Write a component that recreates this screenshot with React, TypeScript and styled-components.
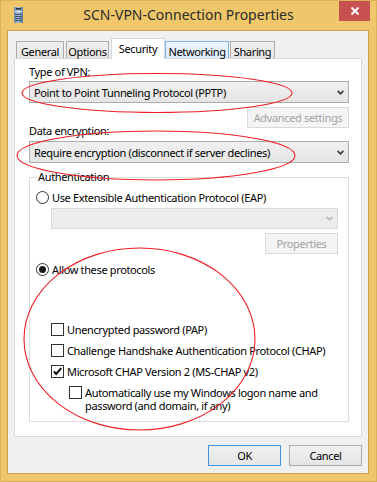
import styled, { createGlobalStyle } from 'styled-components'

const GlobalStyle = createGlobalStyle`
  html, body {
    margin: 0;
    padding: 0;
  }
  body {
    width: 377px;
    height: 482px;
    overflow: hidden;
    font-family: 'Noto Sans', 'Segoe UI', sans-serif;
  }
`

const WindowStyled = styled.div`
  position: relative;
  width: 377px;
  height: 482px;
  box-sizing: border-box;
  border: 1px solid #dcb458;
  background: #efc76a;
  display: flex;
  flex-direction: column;
  font-size: 11px;
  letter-spacing: -0.35px;
  color: #000;
`

const TitleBarStyled = styled.div`
  height: 29px;
  display: grid;
  grid-template-columns: 1fr auto 1fr;
`

const TitleIconStyled = styled.svg`
  margin: 6px 0 0 13px;
  align-self: start;
`

const TitleTextStyled = styled.div`
  font-size: 14px;
  letter-spacing: 0;
  line-height: 27px;
  color: #2b2b2b;
`

const CloseBtnStyled = styled.div`
  justify-self: end;
  width: 31px;
  height: 20px;
  margin-right: 6px;
  background: #c75050;
  display: flex;
  align-items: center;
  justify-content: center;
`

const ClientStyled = styled.div`
  flex: 1;
  margin: 0 7px 7px 6px;
  border: 1px solid #c9a24f;
  background: #f0f0f0;
  padding: 7px 6px;
  display: flex;
  flex-direction: column;
`

const TabRowStyled = styled.div`
  height: 20px;
  display: flex;
  align-items: flex-end;
`

const TabStyled = styled.div<{ $width: number; $ml: number; $active?: boolean; $hover?: boolean }>`
  box-sizing: border-box;
  width: ${p => p.$width}px;
  margin-left: ${p => p.$ml}px;
  height: ${p => (p.$active ? 21 : 17)}px;
  margin-bottom: ${p => (p.$active ? -1 : 0)}px;
  position: ${p => (p.$active ? 'relative' : 'static')};
  z-index: 1;
  padding-top: 2px;
  line-height: 15px;
  text-align: center;
  border: 1px solid ${p => (p.$active ? '#d9d9d9' : p.$hover ? '#7eb4ea' : '#acacac')};
  border-bottom: none;
  background: ${p =>
    p.$active ? '#fff' : p.$hover ? 'linear-gradient(#ecf4fc, #dcecfc)' : 'linear-gradient(#f0f0f0, #e5e5e5)'};
`

const PanelStyled = styled.div`
  flex: 1;
  background: #fff;
  border: 1px solid #d9d9d9;
  padding: 5px 12px 0 14px;
  display: flex;
  flex-direction: column;
`

const FieldLabelStyled = styled.div`
  line-height: 15px;
  margin-bottom: 2px;
`

const ComboStyled = styled.div<{ $disabled?: boolean }>`
  box-sizing: border-box;
  height: ${p => (p.$disabled ? 21 : 22)}px;
  border: 1px solid ${p => (p.$disabled ? '#d9d9d9' : '#acacac')};
  background: ${p => (p.$disabled ? '#ececec' : 'linear-gradient(#f0f0f0, #e5e5e5)')};
  padding: 0 4px;
  display: flex;
  align-items: center;
  justify-content: space-between;
  line-height: 15px;
`

const SubRowStyled = styled.div`
  height: 34px;
  margin-top: 4px;
  display: flex;
  justify-content: space-between;
  align-items: flex-start;
  & > ${FieldLabelStyled} {
    align-self: flex-end;
    margin-bottom: 3px;
  }
`

const PushButtonStyled = styled.button<{ $width: number; $default?: boolean }>`
  box-sizing: border-box;
  width: ${p => p.$width}px;
  height: 21px;
  padding: 0;
  font: inherit;
  letter-spacing: inherit;
  line-height: 15px;
  color: #000;
  border: 1px solid ${p => (p.$default ? '#3d94e6' : '#acacac')};
  background: linear-gradient(#f0f0f0, #e5e5e5);
  &:disabled {
    color: #a3a3a3;
    border-color: #d9d9d9;
    background: #f4f4f4;
  }
`

const GroupStyled = styled.div`
  position: relative;
  margin-top: 14px;
  border: 1px solid #dcdcdc;
  padding: 11px 0 7px 0;
  display: flex;
  flex-direction: column;
`

const GroupTitleStyled = styled.div`
  position: absolute;
  top: -9px;
  left: 7px;
  padding: 0 1px;
  background: #fff;
  line-height: 15px;
`

const RadioRowStyled = styled.div<{ $mt?: number }>`
  height: 17px;
  margin: ${p => p.$mt ?? 0}px 0 0 6px;
  display: flex;
  align-items: center;
  gap: 3px;
  line-height: 15px;
`

const RadioStyled = styled.div<{ $checked?: boolean }>`
  box-sizing: border-box;
  width: 13px;
  height: 13px;
  border-radius: 50%;
  border: 1px solid #333;
  background: #fff;
  display: flex;
  align-items: center;
  justify-content: center;
  &::after {
    content: '';
    display: ${p => (p.$checked ? 'block' : 'none')};
    width: 7px;
    height: 7px;
    border-radius: 50%;
    background: #1a1a1a;
  }
`

const IndentStyled = styled.div<{ $mt: number }>`
  margin: ${p => p.$mt}px 10px 0 21px;
  display: flex;
  flex-direction: column;
`

const PropsBtnWrapStyled = styled.div`
  margin: 4px 10px 0 0;
  align-self: flex-end;
  display: flex;
`

const CheckRowStyled = styled.div<{ $indent: number; $mt: number }>`
  margin: ${p => p.$mt}px 0 0 ${p => p.$indent}px;
  padding: 2px 0;
  display: flex;
  align-items: flex-start;
  gap: 3px;
`

const CheckBoxStyled = styled.div`
  box-sizing: border-box;
  width: 13px;
  height: 13px;
  flex-shrink: 0;
  border: 1px solid #333;
  background: #fff;
  display: flex;
  align-items: center;
  justify-content: center;
`

const CheckLabelStyled = styled.div`
  line-height: 13px;
  white-space: nowrap;
`

const ButtonRowStyled = styled.div`
  margin-top: 8px;
  display: flex;
  justify-content: flex-end;
  gap: 8px;
`

const MarksStyled = styled.svg`
  position: absolute;
  left: -1px;
  top: -1px;
  pointer-events: none;
  z-index: 5;
`

const Chevron = ({ disabled }: { disabled?: boolean }) => (
  <svg width="7" height="5" viewBox="0 0 7 5">
    <path d="M0.6 0.8 L3.5 3.8 L6.4 0.8" fill="none" stroke={disabled ? '#b8b8b8' : '#3c3c3c'} strokeWidth="1.7" />
  </svg>
)

const Radio = ({ checked, label, mt }: { checked?: boolean; label: string; mt?: number }) => (
  <RadioRowStyled $mt={mt}>
    <RadioStyled $checked={checked} />
    <span>{label}</span>
  </RadioRowStyled>
)

const Check = ({
  checked,
  indent,
  mt,
  children,
}: {
  checked?: boolean
  indent: number
  mt: number
  children: React.ReactNode
}) => (
  <CheckRowStyled $indent={indent} $mt={mt}>
    <CheckBoxStyled>
      {checked && (
        <svg width="11" height="11" viewBox="0 0 11 11">
          <path d="M1.8 5.4 L4.2 8 L9.2 2.2" fill="none" stroke="#111" strokeWidth="2" />
        </svg>
      )}
    </CheckBoxStyled>
    <CheckLabelStyled>{children}</CheckLabelStyled>
  </CheckRowStyled>
)

const tabs = [
  { label: 'General', width: 48, ml: 2 },
  { label: 'Options', width: 43, ml: 2 },
  { label: 'Security', width: 54, ml: 2, active: true },
  { label: 'Networking', width: 64, ml: 0, hover: true },
  { label: 'Sharing', width: 45, ml: 1 },
]

export default function App() {
  return (
    <WindowStyled>
      <GlobalStyle />
      <TitleBarStyled>
        <TitleIconStyled width="9" height="16" viewBox="0 0 9 16">
          <defs>
            <linearGradient id="srv" x1="0" y1="0" x2="1" y2="0">
              <stop offset="0" stopColor="#6f8cab" />
              <stop offset="0.5" stopColor="#a9bfd6" />
              <stop offset="1" stopColor="#5d7997" />
            </linearGradient>
          </defs>
          <rect x="0" y="0" width="9" height="16" fill="url(#srv)" />
          <rect x="2" y="1" width="5" height="1.5" fill="#23303d" />
          <rect x="1" y="4" width="7" height="1" fill="#e4edf6" />
          <rect x="1" y="7" width="7" height="1" fill="#3e5672" />
          <rect x="1" y="9" width="7" height="1" fill="#3e5672" />
          <rect x="1" y="11" width="7" height="1" fill="#3e5672" />
          <rect x="1" y="13" width="7" height="1" fill="#3e5672" />
        </TitleIconStyled>
        <TitleTextStyled>SCN-VPN-Connection Properties</TitleTextStyled>
        <CloseBtnStyled>
          <svg width="8" height="8" viewBox="0 0 8 8">
            <path d="M0.5 0.5 L7.5 7.5 M7.5 0.5 L0.5 7.5" stroke="#fff" strokeWidth="2" />
          </svg>
        </CloseBtnStyled>
      </TitleBarStyled>

      <ClientStyled>
        <TabRowStyled>
          {tabs.map(t => (
            <TabStyled key={t.label} $width={t.width} $ml={t.ml} $active={t.active} $hover={t.hover}>
              {t.label}
            </TabStyled>
          ))}
        </TabRowStyled>

        <PanelStyled>
          <FieldLabelStyled>Type of VPN:</FieldLabelStyled>
          <ComboStyled>
            <span>Point to Point Tunneling Protocol (PPTP)</span>
            <Chevron />
          </ComboStyled>
          <SubRowStyled>
            <FieldLabelStyled>Data encryption:</FieldLabelStyled>
            <PushButtonStyled $width={102} disabled>
              Advanced settings
            </PushButtonStyled>
          </SubRowStyled>
          <ComboStyled>
            <span>Require encryption (disconnect if server declines)</span>
            <Chevron />
          </ComboStyled>

          <GroupStyled>
            <GroupTitleStyled>Authentication</GroupTitleStyled>
            <Radio label="Use Extensible Authentication Protocol (EAP)" />
            <IndentStyled $mt={2}>
              <ComboStyled $disabled>
                <span />
                <Chevron disabled />
              </ComboStyled>
            </IndentStyled>
            <PropsBtnWrapStyled>
              <PushButtonStyled $width={73} disabled>
                Properties
              </PushButtonStyled>
            </PropsBtnWrapStyled>
            <Radio label="Allow these protocols" checked mt={7} />
            <Check indent={21} mt={43}>
              Unencrypted password (PAP)
            </Check>
            <Check indent={21} mt={4}>
              Challenge Handshake Authentication Protocol (CHAP)
            </Check>
            <Check indent={21} mt={4} checked>
              Microsoft CHAP Version 2 (MS-CHAP v2)
            </Check>
            <Check indent={39} mt={4}>
              Automatically use my Windows logon name and
              <br />
              password (and domain, if any)
            </Check>
          </GroupStyled>
        </PanelStyled>

        <ButtonRowStyled>
          <PushButtonStyled $width={73} $default>
            OK
          </PushButtonStyled>
          <PushButtonStyled $width={73}>Cancel</PushButtonStyled>
        </ButtonRowStyled>
      </ClientStyled>

      <MarksStyled width="377" height="482" viewBox="0 0 377 482">
        <g fill="none" stroke="#ee1f26" strokeWidth="1.1">
          <ellipse cx="157" cy="93" rx="135" ry="19.5" />
          <ellipse cx="156" cy="155.5" rx="139" ry="24.5" />
          <ellipse cx="139.5" cy="339" rx="115.5" ry="91" />
        </g>
      </MarksStyled>
    </WindowStyled>
  )
}
